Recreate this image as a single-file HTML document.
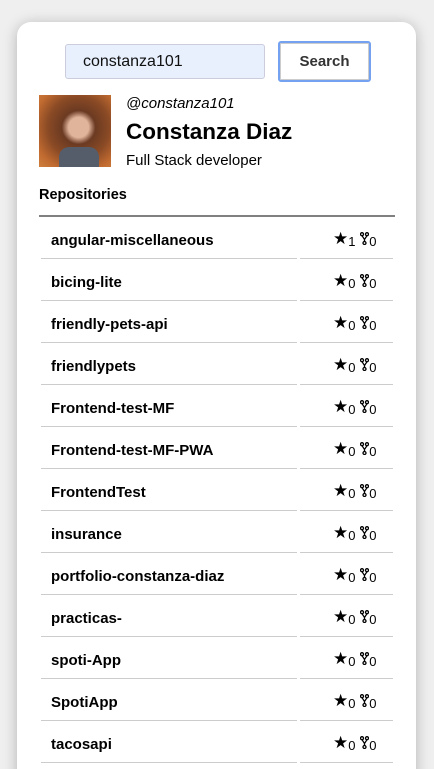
<!DOCTYPE html>
<html><head><meta charset="utf-8"><style>
*{margin:0;padding:0;box-sizing:border-box}
html,body{width:434px;height:769px;overflow:hidden}
body{background:#efefef;font-family:"Liberation Sans",Arial,sans-serif;position:relative}
.card{position:absolute;left:17px;top:22px;width:399px;height:760px;background:#fff;border-radius:14px 14px 0 0;box-shadow:0 2px 14px rgba(0,0,0,.25)}
.inp{position:absolute;left:65px;top:44px;width:200px;height:35px;background:#e8f0fe;border:1px solid #ccd;border-radius:3px;font-size:16px;padding:8px 0 0 17px;color:#111}
.btn{position:absolute;left:278px;top:41px;width:93px;height:41px;border:2px solid #74a2f0;border-radius:3px;background:#fff;box-shadow:inset 0 0 0 1px #ccc;font-weight:bold;font-size:15px;color:#333;text-align:center;line-height:37px}
.av{position:absolute;left:39px;top:95px;width:72px;height:72px;background:radial-gradient(circle at 55% 45%,#e0b49a 0 18%,#6b3a22 30%,#8a4a25 55%,#c06a30 80%,#d08040);overflow:hidden}
.av:after{content:"";position:absolute;left:20px;bottom:0;width:40px;height:20px;background:#555c6a;border-radius:10px 10px 0 0}
.h{position:absolute;left:126px;top:95px;font-size:15px;font-style:italic}
.n{position:absolute;left:126px;top:119px;font-size:22.5px;font-weight:bold}
.d{position:absolute;left:126px;top:152px;font-size:15px}
.rp{position:absolute;left:39px;top:187px;font-size:14.5px;font-weight:bold}
.hl{position:absolute;left:39px;top:215px;width:356px;height:2px;background:#808080}
.row{position:absolute;left:41px;height:42px;width:352px}
.row .nm{position:absolute;left:10px;top:15px;font-size:15px;font-weight:bold}
.row .l1{position:absolute;left:0;bottom:0;width:256px;height:1px;background:#ccc}
.row .l2{position:absolute;left:259px;bottom:0;width:93px;height:1px;background:#ccc}
.row .st{position:absolute;left:292px;top:12px;font-size:17px;white-space:nowrap;line-height:20px}
.st small{font-size:13px;position:relative;top:2px}
</style></head><body>
<div class="card"></div>
<div class="inp">constanza101</div>
<div class="btn">Search</div>
<div class="av"></div>
<div class="h">@constanza101</div>
<div class="n">Constanza Diaz</div>
<div class="d">Full Stack developer</div>
<div class="rp">Repositories</div>
<div class="hl"></div>
<div class="row" style="top:217px"><div class="nm">angular-miscellaneous</div><div class="st">★<small>1</small> <svg width="9" height="13" viewBox="0 0 9 13" style="vertical-align:-1px"><g fill="none" stroke="#000" stroke-width="1.3"><circle cx="2" cy="2.2" r="1.5"/><circle cx="7" cy="2.2" r="1.5"/><circle cx="4.5" cy="11" r="1.5"/><path d="M2 3.7L4.5 7.5L7 3.7M4.5 7.5V9.5"/></g></svg><small>0</small></div><div class="l1"></div><div class="l2"></div></div>
<div class="row" style="top:259px"><div class="nm">bicing-lite</div><div class="st">★<small>0</small> <svg width="9" height="13" viewBox="0 0 9 13" style="vertical-align:-1px"><g fill="none" stroke="#000" stroke-width="1.3"><circle cx="2" cy="2.2" r="1.5"/><circle cx="7" cy="2.2" r="1.5"/><circle cx="4.5" cy="11" r="1.5"/><path d="M2 3.7L4.5 7.5L7 3.7M4.5 7.5V9.5"/></g></svg><small>0</small></div><div class="l1"></div><div class="l2"></div></div>
<div class="row" style="top:301px"><div class="nm">friendly-pets-api</div><div class="st">★<small>0</small> <svg width="9" height="13" viewBox="0 0 9 13" style="vertical-align:-1px"><g fill="none" stroke="#000" stroke-width="1.3"><circle cx="2" cy="2.2" r="1.5"/><circle cx="7" cy="2.2" r="1.5"/><circle cx="4.5" cy="11" r="1.5"/><path d="M2 3.7L4.5 7.5L7 3.7M4.5 7.5V9.5"/></g></svg><small>0</small></div><div class="l1"></div><div class="l2"></div></div>
<div class="row" style="top:343px"><div class="nm">friendlypets</div><div class="st">★<small>0</small> <svg width="9" height="13" viewBox="0 0 9 13" style="vertical-align:-1px"><g fill="none" stroke="#000" stroke-width="1.3"><circle cx="2" cy="2.2" r="1.5"/><circle cx="7" cy="2.2" r="1.5"/><circle cx="4.5" cy="11" r="1.5"/><path d="M2 3.7L4.5 7.5L7 3.7M4.5 7.5V9.5"/></g></svg><small>0</small></div><div class="l1"></div><div class="l2"></div></div>
<div class="row" style="top:385px"><div class="nm">Frontend-test-MF</div><div class="st">★<small>0</small> <svg width="9" height="13" viewBox="0 0 9 13" style="vertical-align:-1px"><g fill="none" stroke="#000" stroke-width="1.3"><circle cx="2" cy="2.2" r="1.5"/><circle cx="7" cy="2.2" r="1.5"/><circle cx="4.5" cy="11" r="1.5"/><path d="M2 3.7L4.5 7.5L7 3.7M4.5 7.5V9.5"/></g></svg><small>0</small></div><div class="l1"></div><div class="l2"></div></div>
<div class="row" style="top:427px"><div class="nm">Frontend-test-MF-PWA</div><div class="st">★<small>0</small> <svg width="9" height="13" viewBox="0 0 9 13" style="vertical-align:-1px"><g fill="none" stroke="#000" stroke-width="1.3"><circle cx="2" cy="2.2" r="1.5"/><circle cx="7" cy="2.2" r="1.5"/><circle cx="4.5" cy="11" r="1.5"/><path d="M2 3.7L4.5 7.5L7 3.7M4.5 7.5V9.5"/></g></svg><small>0</small></div><div class="l1"></div><div class="l2"></div></div>
<div class="row" style="top:469px"><div class="nm">FrontendTest</div><div class="st">★<small>0</small> <svg width="9" height="13" viewBox="0 0 9 13" style="vertical-align:-1px"><g fill="none" stroke="#000" stroke-width="1.3"><circle cx="2" cy="2.2" r="1.5"/><circle cx="7" cy="2.2" r="1.5"/><circle cx="4.5" cy="11" r="1.5"/><path d="M2 3.7L4.5 7.5L7 3.7M4.5 7.5V9.5"/></g></svg><small>0</small></div><div class="l1"></div><div class="l2"></div></div>
<div class="row" style="top:511px"><div class="nm">insurance</div><div class="st">★<small>0</small> <svg width="9" height="13" viewBox="0 0 9 13" style="vertical-align:-1px"><g fill="none" stroke="#000" stroke-width="1.3"><circle cx="2" cy="2.2" r="1.5"/><circle cx="7" cy="2.2" r="1.5"/><circle cx="4.5" cy="11" r="1.5"/><path d="M2 3.7L4.5 7.5L7 3.7M4.5 7.5V9.5"/></g></svg><small>0</small></div><div class="l1"></div><div class="l2"></div></div>
<div class="row" style="top:553px"><div class="nm">portfolio-constanza-diaz</div><div class="st">★<small>0</small> <svg width="9" height="13" viewBox="0 0 9 13" style="vertical-align:-1px"><g fill="none" stroke="#000" stroke-width="1.3"><circle cx="2" cy="2.2" r="1.5"/><circle cx="7" cy="2.2" r="1.5"/><circle cx="4.5" cy="11" r="1.5"/><path d="M2 3.7L4.5 7.5L7 3.7M4.5 7.5V9.5"/></g></svg><small>0</small></div><div class="l1"></div><div class="l2"></div></div>
<div class="row" style="top:595px"><div class="nm">practicas-</div><div class="st">★<small>0</small> <svg width="9" height="13" viewBox="0 0 9 13" style="vertical-align:-1px"><g fill="none" stroke="#000" stroke-width="1.3"><circle cx="2" cy="2.2" r="1.5"/><circle cx="7" cy="2.2" r="1.5"/><circle cx="4.5" cy="11" r="1.5"/><path d="M2 3.7L4.5 7.5L7 3.7M4.5 7.5V9.5"/></g></svg><small>0</small></div><div class="l1"></div><div class="l2"></div></div>
<div class="row" style="top:637px"><div class="nm">spoti-App</div><div class="st">★<small>0</small> <svg width="9" height="13" viewBox="0 0 9 13" style="vertical-align:-1px"><g fill="none" stroke="#000" stroke-width="1.3"><circle cx="2" cy="2.2" r="1.5"/><circle cx="7" cy="2.2" r="1.5"/><circle cx="4.5" cy="11" r="1.5"/><path d="M2 3.7L4.5 7.5L7 3.7M4.5 7.5V9.5"/></g></svg><small>0</small></div><div class="l1"></div><div class="l2"></div></div>
<div class="row" style="top:679px"><div class="nm">SpotiApp</div><div class="st">★<small>0</small> <svg width="9" height="13" viewBox="0 0 9 13" style="vertical-align:-1px"><g fill="none" stroke="#000" stroke-width="1.3"><circle cx="2" cy="2.2" r="1.5"/><circle cx="7" cy="2.2" r="1.5"/><circle cx="4.5" cy="11" r="1.5"/><path d="M2 3.7L4.5 7.5L7 3.7M4.5 7.5V9.5"/></g></svg><small>0</small></div><div class="l1"></div><div class="l2"></div></div>
<div class="row" style="top:721px"><div class="nm">tacosapi</div><div class="st">★<small>0</small> <svg width="9" height="13" viewBox="0 0 9 13" style="vertical-align:-1px"><g fill="none" stroke="#000" stroke-width="1.3"><circle cx="2" cy="2.2" r="1.5"/><circle cx="7" cy="2.2" r="1.5"/><circle cx="4.5" cy="11" r="1.5"/><path d="M2 3.7L4.5 7.5L7 3.7M4.5 7.5V9.5"/></g></svg><small>0</small></div><div class="l1"></div><div class="l2"></div></div>
</body></html>
